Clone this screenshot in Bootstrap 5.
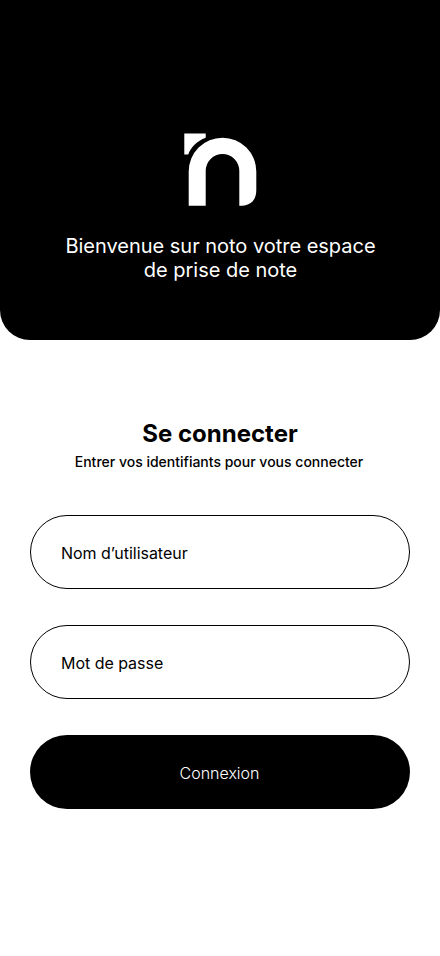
<!DOCTYPE html>
<html lang="fr">
<head>
<meta charset="utf-8">
<meta name="viewport" content="width=device-width, initial-scale=1">
<title>noto</title>
<link href="https://cdn.jsdelivr.net/npm/bootstrap@5.3.0/dist/css/bootstrap.min.css" rel="stylesheet">
<style>
body{font-family:Inter,sans-serif;color:#000;background:#fff;height:956px;overflow:hidden}
.hero{height:340px;background:#000;border-radius:0 0 30px 30px;padding-top:133px}
.hero-text{font-size:20px;line-height:24px;margin:27px 0 0;font-weight:400;letter-spacing:-.02px;padding-left:1px}
.title{font-size:24px;line-height:29px;font-weight:700;padding-top:79px}
.sub{font-size:14px;line-height:17px;font-weight:500;margin-top:5px;padding-right:2px}
.field{height:74px;border:1px solid #000;border-radius:37px;padding:2px 30px 0;font-size:16px;color:#000;letter-spacing:-.03px}
.field::placeholder{color:#000;opacity:1}
.send{height:74px;border-radius:37px;background:#000;color:#fff;font-size:16px;font-weight:300;padding:8px 13px 6px 12px}
.stack{gap:36px;padding:0 30px;margin-top:45px}
</style>
</head>
<body>
<header class="hero d-flex flex-column align-items-center text-white text-center">
<svg width="74" height="74" viewBox="183 133 74 74" fill="#fff" aria-hidden="true"><path d="M184.300 133.500H205.700V137.700C197 141 191 147 188.200 154.500H184.300Z"/><path d="M188.700 205.800V171.500A33.800 33.800 0 0 1 256.300 171.500V190C256.300 201 250 205.800 239.300 205.800V171A16.800 17 0 0 0 205.700 171V205.800Z"/></svg>
<p class="hero-text">Bienvenue sur noto votre espace<br>de prise de note</p>
</header>
<main>
<div class="text-center">
<h1 class="title mb-0">Se connecter</h1>
<p class="sub mb-0">Entrer vos identifiants pour vous connecter</p></div>
<form class="stack d-flex flex-column">
<input class="field form-control" placeholder="Nom d’utilisateur">
<input class="field form-control" type="password" placeholder="Mot de passe">
<button type="button" class="send btn w-100">Connexion</button>
</form>
</main>
<script src="https://cdn.jsdelivr.net/npm/bootstrap@5.3.0/dist/js/bootstrap.bundle.min.js"></script>
</body>
</html>
